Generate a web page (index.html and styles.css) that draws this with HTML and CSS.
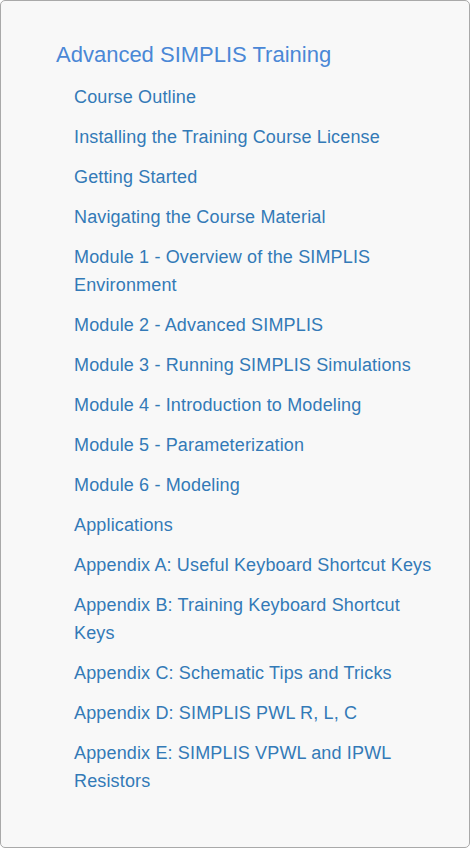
FILE: index.html
```html
<!DOCTYPE html>
<html lang="en">
<head>
<meta charset="utf-8">
<title>Advanced SIMPLIS Training</title>
<link rel="stylesheet" href="styles.css">
</head>
<body>
<nav class="panel">
  <a class="panel-title" href="#">Advanced SIMPLIS Training</a>
  <ul class="toc">
    <li><a href="#">Course Outline</a></li>
    <li><a href="#">Installing the Training Course License</a></li>
    <li><a href="#">Getting Started</a></li>
    <li><a href="#">Navigating the Course Material</a></li>
    <li><a href="#">Module 1 - Overview of the SIMPLIS Environment</a></li>
    <li><a href="#">Module 2 - Advanced SIMPLIS</a></li>
    <li><a href="#">Module 3 - Running SIMPLIS Simulations</a></li>
    <li><a href="#">Module 4 - Introduction to Modeling</a></li>
    <li><a href="#">Module 5 - Parameterization</a></li>
    <li><a href="#">Module 6 - Modeling</a></li>
    <li><a href="#">Applications</a></li>
    <li><a href="#">Appendix A: Useful Keyboard Shortcut Keys</a></li>
    <li><a href="#">Appendix B: Training Keyboard Shortcut Keys</a></li>
    <li><a href="#">Appendix C: Schematic Tips and Tricks</a></li>
    <li><a href="#">Appendix D: SIMPLIS PWL R, L, C</a></li>
    <li><a href="#">Appendix E: SIMPLIS VPWL and IPWL Resistors</a></li>
  </ul>
</nav>
</body>
</html>
```
FILE: styles.css
```css
html, body {
  margin: 0;
  padding: 0;
  background: #ffffff;
}
body {
  font-family: "Liberation Sans", Arial, sans-serif;
}
.panel {
  box-sizing: border-box;
  width: 470px;
  height: 848px;
  background: #f8f8f8;
  border: 1px solid #a9a9a9;
  border-radius: 5px;
  padding: 39px 31px 0 55px;
}
.panel-title {
  display: block;
  font-size: 22px;
  line-height: 30px;
  color: #4a87d6;
  text-decoration: none;
  margin-bottom: 7px;
}
.toc {
  list-style: none;
  margin: 0;
  padding: 0 0 0 18px;
}
.toc li {
  padding: 6px 0;
  font-size: 18px;
  line-height: 28px;
  letter-spacing: 0.15px;
}
.toc a {
  color: #337ab7;
  text-decoration: none;
}
```
